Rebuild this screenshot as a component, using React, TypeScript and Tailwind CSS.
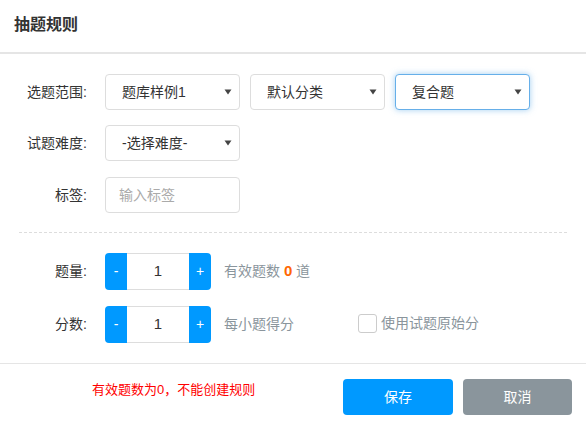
import React from "react";

const font = "font-['Liberation_Sans','Noto_Sans_CJK_SC',sans-serif]";

const Arrow = () => (
  <svg width="8" height="6" viewBox="0 0 8 6" className="absolute right-[7px] top-1/2 -translate-y-1/2">
    <path d="M0.5 0.5 H7.5 L4 5.5 Z" fill="#444" />
  </svg>
);

interface SelectProps {
  value: string;
  focused?: boolean;
}

const FakeSelect: React.FC<SelectProps> = ({ value, focused }) => (
  <div
    className={`relative w-[135px] h-[36px] rounded-[4px] border bg-white flex items-center pl-[16px] text-[14px] text-[#333] ${
      focused ? "border-[#66afe9] shadow-[0_0_6px_rgba(102,175,233,0.6)]" : "border-[#ddd]"
    }`}
  >
    {value}
    <Arrow />
  </div>
);

const Stepper: React.FC<{ value: number }> = ({ value }) => (
  <div className="flex h-[37px] w-[106px]">
    <button className="w-[22px] h-full bg-[#0099ff] text-white text-[14px] rounded-l-[4px] flex items-center justify-center">-</button>
    <div className="flex-1 border-y border-[#ddd] flex items-center justify-center text-[15px] text-[#333]">{value}</div>
    <button className="w-[22px] h-full bg-[#0099ff] text-white text-[14px] rounded-r-[4px] flex items-center justify-center">+</button>
  </div>
);

const Label: React.FC<{ text: string }> = ({ text }) => (
  <div className="w-[87px] text-right text-[14px] text-[#333] shrink-0">{text}</div>
);

export default function App() {
  return (
    <div className={`w-[586px] h-[428px] bg-white ${font}`}>
      {/* header */}
      <div className="h-[54px] border-b-2 border-[#e5e5e5] flex items-center pl-[14px] pb-[2px]">
        <span className="text-[16px] font-bold text-[#333]">抽题规则</span>
      </div>

      {/* form */}
      <div className="pt-[20px]">
        <div className="flex items-center gap-[18px] h-[36px]">
          <Label text="选题范围:" />
          <div className="flex gap-[10px]">
            <FakeSelect value="题库样例1" />
            <FakeSelect value="默认分类" />
            <FakeSelect value="复合题" focused />
          </div>
        </div>
        <div className="flex items-center gap-[18px] h-[36px] mt-[15px]">
          <Label text="试题难度:" />
          <FakeSelect value="-选择难度-" />
        </div>
        <div className="flex items-center gap-[18px] h-[36px] mt-[16px]">
          <Label text="标签:" />
          <div className="w-[135px] h-[36px] rounded-[4px] border border-[#ddd] flex items-center pl-[13px] text-[14px] text-[#aaa]">
            输入标签
          </div>
        </div>

        <div className="mx-[19px] mt-[19px] border-t border-dashed border-[#ddd]" />

        <div className="flex items-center gap-[18px] h-[37px] mt-[20px]">
          <Label text="题量:" />
          <Stepper value={1} />
          <div className="ml-[-5px] text-[14px] text-[#8a959c]">
            有效题数 <span className="text-[#ff6600] font-bold text-[15px]">0</span> 道
          </div>
        </div>
        <div className="flex items-center gap-[18px] h-[37px] mt-[16px]">
          <Label text="分数:" />
          <Stepper value={1} />
          <div className="ml-[-5px] text-[14px] text-[#8a959c] w-[121px]">每小题得分</div>
          <label className="flex items-center gap-[4px] text-[14px] text-[#8a959c] ml-[-5px] mt-[-2px]">
            <span className="w-[19px] h-[19px] border border-[#ccc] rounded-[3px] bg-white" />
            使用试题原始分
          </label>
        </div>
      </div>

      {/* footer */}
      <div className="mt-[20px] border-t border-[#e5e5e5] flex items-start pt-[15px] pl-[92px] pr-[14px]">
        <div className="text-[13px] text-[#ff0000] mt-[1px]">有效题数为0，不能创建规则</div>
        <div className="ml-auto flex gap-[10px]">
          <button className="w-[110px] h-[36px] rounded-[4px] bg-[#0099ff] text-white text-[14px]">保存</button>
          <button className="w-[109px] h-[36px] rounded-[4px] bg-[#8a959c] text-white text-[14px]">取消</button>
        </div>
      </div>
    </div>
  );
}
